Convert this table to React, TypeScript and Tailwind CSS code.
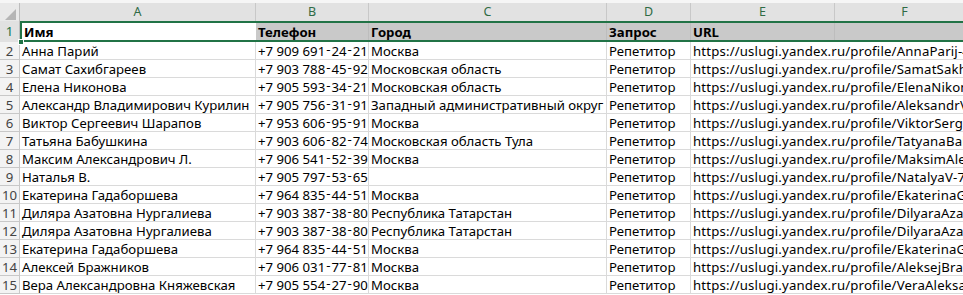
import React from 'react';

// ширины колонок как в листе Excel
const COLS = ['A', 'B', 'C', 'D', 'E', 'F'];

const rows = [
  ['Анна Парий', '+7 909 691-24-21', 'Москва', 'Репетитор', 'https://uslugi.yandex.ru/profile/AnnaParij-4f2c1'],
  ['Самат Сахибгареев', '+7 903 788-45-92', 'Московская область', 'Репетитор', 'https://uslugi.yandex.ru/profile/SamatSakhibgareev-2d9'],
  ['Елена Никонова', '+7 905 593-34-21', 'Московская область', 'Репетитор', 'https://uslugi.yandex.ru/profile/ElenaNikonova-8a1'],
  ['Александр Владимирович Курилин', '+7 905 756-31-91', 'Западный административный округ', 'Репетитор', 'https://uslugi.yandex.ru/profile/AleksandrVladimirovich'],
  ['Виктор Сергеевич Шарапов', '+7 953 606-95-91', 'Москва', 'Репетитор', 'https://uslugi.yandex.ru/profile/ViktorSergeevich'],
  ['Татьяна Бабушкина', '+7 903 606-82-74', 'Московская область Тула', 'Репетитор', 'https://uslugi.yandex.ru/profile/TatyanaBabushkina'],
  ['Максим Александрович Л.', '+7 906 541-52-39', 'Москва', 'Репетитор', 'https://uslugi.yandex.ru/profile/MaksimAleksandrovich'],
  ['Наталья В.', '+7 905 797-53-65', '', 'Репетитор', 'https://uslugi.yandex.ru/profile/NatalyaV-7b3e9'],
  ['Екатерина Гадаборшева', '+7 964 835-44-51', 'Москва', 'Репетитор', 'https://uslugi.yandex.ru/profile/EkaterinaGadaborsheva'],
  ['Диляра Азатовна Нургалиева', '+7 903 387-38-80', 'Республика Татарстан', 'Репетитор', 'https://uslugi.yandex.ru/profile/DilyaraAzatovna'],
  ['Диляра Азатовна Нургалиева', '+7 903 387-38-80', 'Республика Татарстан', 'Репетитор', 'https://uslugi.yandex.ru/profile/DilyaraAzatovna'],
  ['Екатерина Гадаборшева', '+7 964 835-44-51', 'Москва', 'Репетитор', 'https://uslugi.yandex.ru/profile/EkaterinaGadaborsheva'],
  ['Алексей Бражников', '+7 906 031-77-81', 'Москва', 'Репетитор', 'https://uslugi.yandex.ru/profile/AleksejBrazhnikov'],
  ['Вера Александровна Княжевская', '+7 905 554-27-90', 'Москва', 'Репетитор', 'https://uslugi.yandex.ru/profile/VeraAleksandrovna'],
];

const grid = 'grid grid-cols-[20px_236px_113px_238px_84px_144px_140px]';

// телефон: дефисы в Excel отображаются приподнятыми
const Phone = ({ value }: { value: string }) => {
  const parts = value.split('-');
  return (
    <>
      {parts.map((p, i) => (
        <React.Fragment key={i}>
          {i > 0 && <span className="relative -top-[2px] mx-[1px]">-</span>}
          {p}
        </React.Fragment>
      ))}
    </>
  );
};

const Cell = ({ children, className = '' }: { children?: React.ReactNode; className?: string }) => (
  <div className={`h-[18px] pl-[2px] leading-[18px] whitespace-nowrap border-b border-[#dadada] ${className}`}>
    {children}
  </div>
);

export default function App() {
  return (
    <div
      className="w-[963px] h-[295px] overflow-hidden bg-white text-[13.2px] text-black"
      style={{ fontFamily: '"Noto Sans", "Open Sans", sans-serif' }}
    >
      <div className="w-[980px]">
        {/* заголовки колонок */}
        <div className="h-[3px] bg-[#f6f6f6]" />
        <div className={`${grid} h-[18px] bg-[#e2e2e2] text-[#2f6b45]`}>
          <div className="relative border-r border-[#bdbdbd] bg-[#e9e9e9]">
            <div className="absolute right-[3px] bottom-[2px] w-0 h-0 border-l-[11px] border-l-transparent border-b-[11px] border-b-[#b5b5b5]" />
          </div>
          {COLS.map((c) => (
            <div key={c} className="flex items-center justify-center border-r border-[#c8c8c8] text-[12.5px]">
              {c}
            </div>
          ))}
        </div>

        {/* строка 1 — выделенная */}
        <div className={`${grid} relative h-[21px] font-bold`}>
          <div className="flex items-center justify-center bg-[#e1e1e1] border-r border-[#bdbdbd] font-normal text-[#217346]">1</div>
          <div className="pl-[4px] pt-[2px] leading-[18px] bg-white">Имя</div>
          <div className="pl-[2px] pt-[2px] leading-[18px] bg-[#c9c9c9] border-r border-[#bdbdbd]">Телефон</div>
          <div className="pl-[2px] pt-[2px] leading-[18px] bg-[#c9c9c9] border-r border-[#bdbdbd]">Город</div>
          <div className="pl-[2px] pt-[2px] leading-[18px] bg-[#c9c9c9] border-r border-[#bdbdbd]">Запрос</div>
          <div className="pl-[2px] pt-[2px] leading-[18px] bg-[#c9c9c9] border-r border-[#bdbdbd]">URL</div>
          <div className="bg-[#c9c9c9]" />
          <div className="absolute left-[20px] right-0 top-0 bottom-0 border-2 border-[#217346] pointer-events-none" />
          <div className="absolute left-[18px] -bottom-[3px] w-[6px] h-[6px] bg-[#217346] border border-white" />
        </div>

        {/* данные */}
        {rows.map((r, i) => (
          <div key={i} className={grid}>
            <div className="h-[18px] leading-[18px] text-center bg-[#f3f3f3] text-[#444] border-r border-b border-[#c8c8c8]">
              {i + 2}
            </div>
            <Cell className="border-r">{r[0]}</Cell>
            <Cell className="border-r">
              <Phone value={r[1]} />
            </Cell>
            <Cell className="border-r">{r[2]}</Cell>
            <Cell className="border-r">{r[3]}</Cell>
            <Cell className="overflow-visible tracking-[0.17px]">{r[4]}</Cell>
            <Cell />
          </div>
        ))}
      </div>
    </div>
  );
}
